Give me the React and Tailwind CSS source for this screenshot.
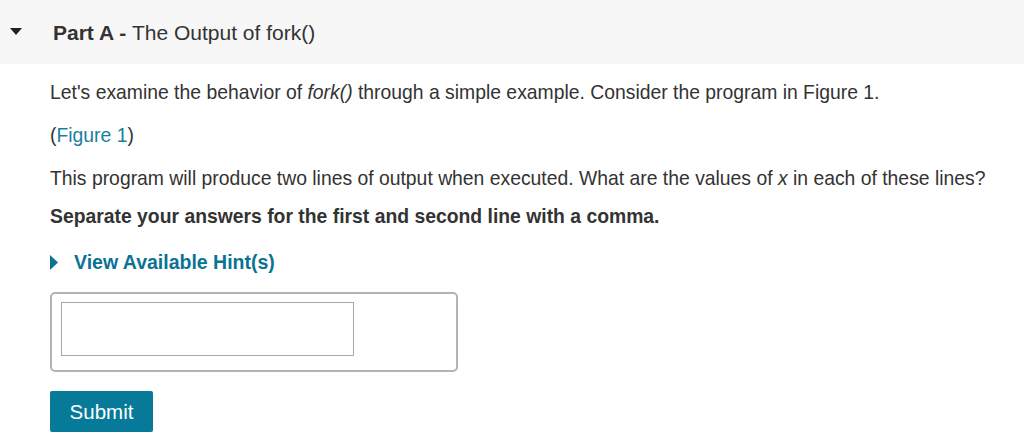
import React from 'react';

const App = () => {
  return (
    <div className="w-[1024px] h-[447px] bg-white text-[#333333] overflow-hidden" style={{ fontFamily: '"Liberation Sans", Arial, sans-serif' }}>
      <div className="h-[64px] bg-[#f7f7f7] flex items-center">
        <div className="w-[53px] flex pl-[10px]">
          <svg width="12" height="8" viewBox="0 0 12 8">
            <polygon points="0,0 12,0 6,7" fill="#222" />
          </svg>
        </div>
        <h2 className="text-[21px] leading-none">
          <span className="font-bold">Part A - </span>The Output of fork()
        </h2>
      </div>

      <div className="pl-[50px] text-[19.35px] leading-[22px]">
        <p className="mt-[17px]">
          Let's examine the behavior of <em>fork()</em> through a simple example. Consider the program in Figure 1.
        </p>
        <p className="mt-[21px]">
          (<span className="text-[#1a7fa0]">Figure 1</span>)
        </p>
        <p className="mt-[21px]">
          This program will produce two lines of output when executed. What are the values of <em>x</em> in each of these lines?
        </p>
        <p className="mt-[16px] font-bold">
          Separate your answers for the first and second line with a comma.
        </p>
        <div className="mt-[24px] flex items-center gap-[16px] text-[#0a7394] font-bold text-[19.5px]">
          <svg width="8" height="15" viewBox="0 0 8 15">
            <polygon points="0,0 8,7.5 0,15" fill="#0a7394" />
          </svg>
          <span>View Available Hint(s)</span>
        </div>
        <div className="mt-[19px] w-[408px] h-[80px] border-2 border-[#b3b3b3] rounded-[5px] pl-[9px] pt-[8px]">
          <input type="text" className="w-[293px] h-[54px] border border-[#a9a9a9] bg-white outline-none" />
        </div>
        <button className="mt-[19px] w-[103px] h-[41px] bg-[#077a99] text-white text-[20.5px] rounded-[2px]">
          Submit
        </button>
      </div>
    </div>
  );
};

export default App;
